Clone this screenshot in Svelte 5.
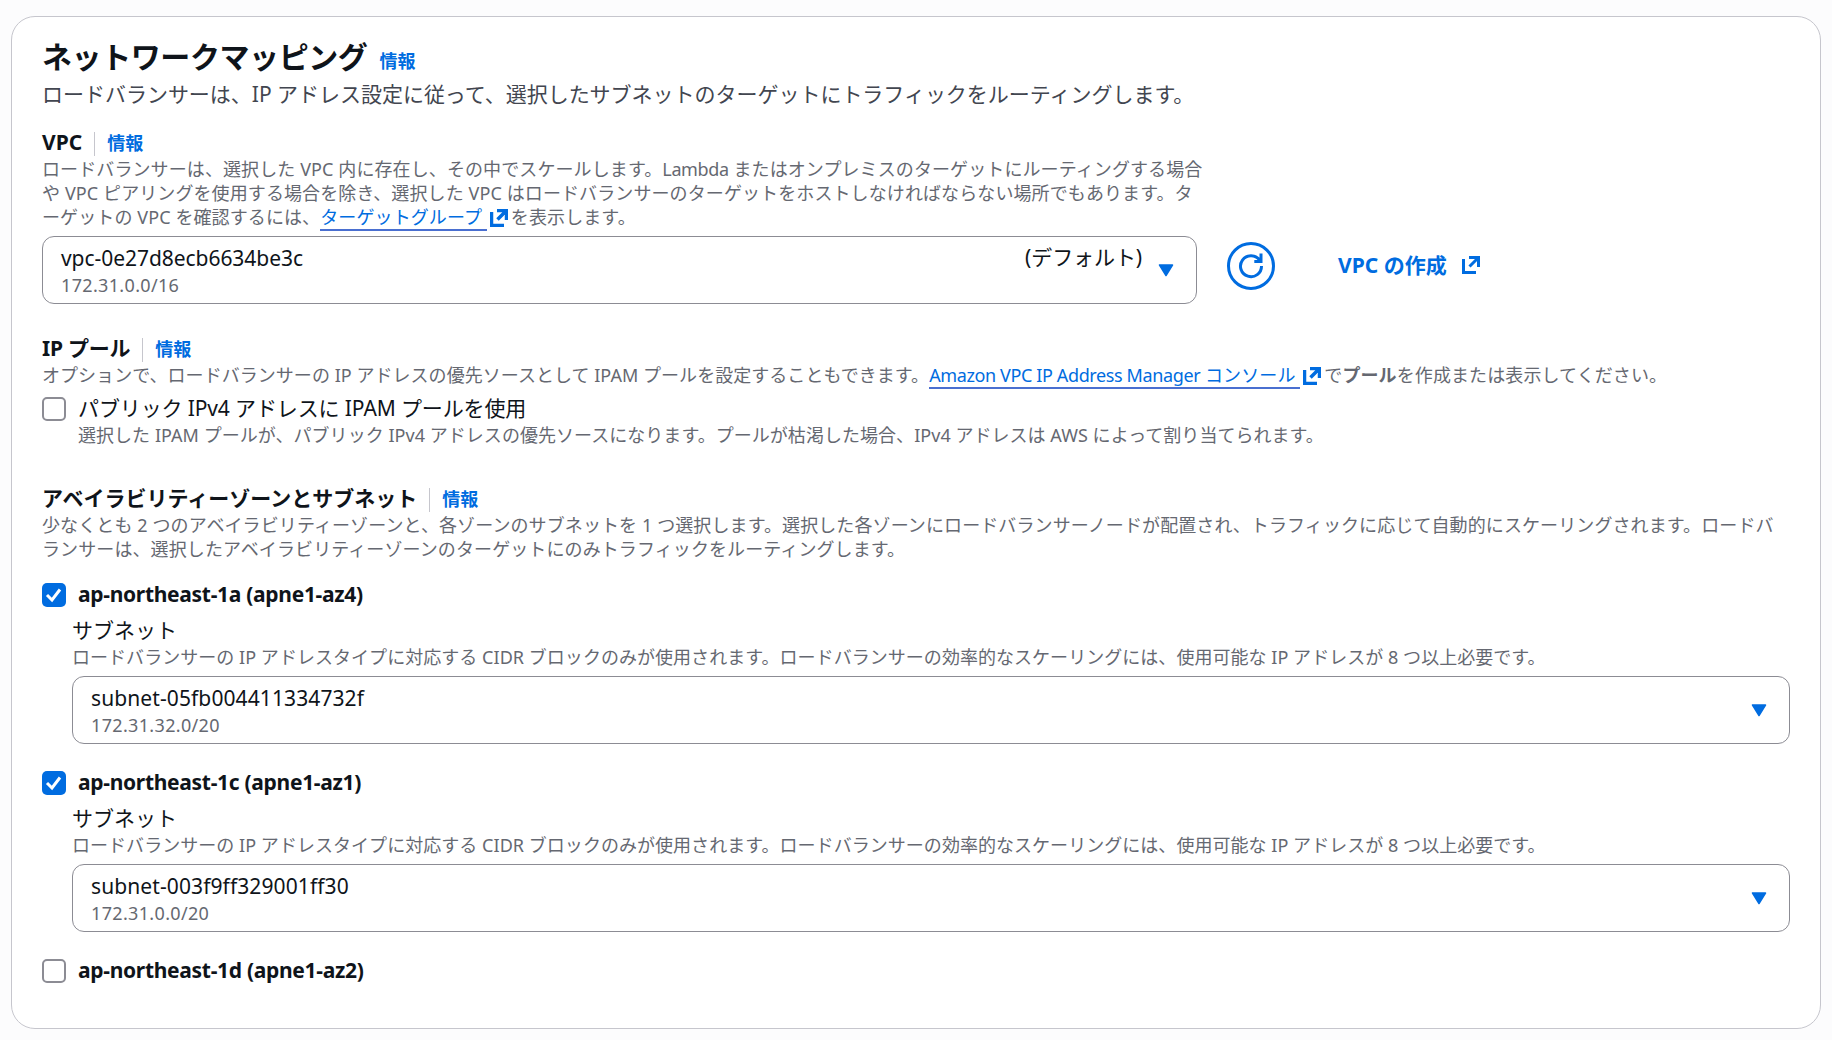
<script>
  let vpc = {
    id: 'vpc-0e27d8ecb6634be3c',
    cidr: '172.31.0.0/16',
    note: '(デフォルト)'
  };

  let useIpamPool = false;

  let zones = [
    { name: 'ap-northeast-1a (apne1-az4)', checked: true, subnet: 'subnet-05fb004411334732f', cidr: '172.31.32.0/20' },
    { name: 'ap-northeast-1c (apne1-az1)', checked: true, subnet: 'subnet-003f9ff329001ff30', cidr: '172.31.0.0/20' },
    { name: 'ap-northeast-1d (apne1-az2)', checked: false }
  ];
</script>

{#snippet external()}
  <svg class="external" viewBox="0 0 18 18" aria-hidden="true">
    <path d="M7 1.5h9.5V11M16 2L7.5 10.5M1.5 3v13.5h12.5" />
  </svg>
{/snippet}

{#snippet caret()}
  <svg class="caret" viewBox="0 0 16 13" aria-hidden="true">
    <path d="M1.5 1h13L8 11.5z" />
  </svg>
{/snippet}

<section class="container">
  <header>
    <h2>ネットワークマッピング</h2>
    <a class="info" href="#info">情報</a>
  </header>
  <p class="lead">ロードバランサーは、IP アドレス設定に従って、選択したサブネットのターゲットにトラフィックをルーティングします。</p>

  <div class="field vpc">
    <div class="label"><h3>VPC</h3><a class="info" href="#info">情報</a></div>
    <p class="hint wide">
      ロードバランサーは、選択した VPC 内に存在し、その中でスケールします。<span class="latin">Lambda</span> またはオンプレミスのターゲットにルーティングする場合<br />や VPC ピアリングを使用する場合を除き、選択した VPC はロードバランサーのターゲットをホストしなければならない場所でもあります。タ<br />ーゲットの VPC を確認するには、<a class="link" href="#tg">ターゲットグループ&nbsp;</a>{@render external()}を表示します。
    </p>
    <div class="vpc-row">
      <button class="select vpc-select">
        <span class="option">
          <span class="value">{vpc.id}</span>
          <span class="cidr">{vpc.cidr}</span>
        </span>
        <span class="note">{vpc.note}</span>
        {@render caret()}
      </button>
      <button class="refresh" aria-label="更新">
        <svg viewBox="0 0 24 24" aria-hidden="true">
          <path d="M22.5 12A10.5 10.5 0 1 1 20.5 6M22 -0.5v8H15.3" />
        </svg>
      </button>
      <a class="create" href="#create">VPC の作成{@render external()}</a>
    </div>
  </div>

  <div class="field pool">
    <div class="label"><h3>IP プール</h3><a class="info" href="#info">情報</a></div>
    <p class="hint">
      オプションで、ロードバランサーの IP アドレスの優先ソースとして IPAM プールを設定することもできます。<a class="link" href="#ipam"><span class="latin">Amazon VPC IP Address Manager</span> コンソール&nbsp;</a>{@render external()}<span class="wide">で<b>プール</b>を作成または表示してください。</span>
    </p>
    <label class="check">
      <input type="checkbox" bind:checked={useIpamPool} />
      <span>パブリック IPv4 アドレスに IPAM プールを使用</span>
    </label>
    <p class="hint check-hint">選択した IPAM プールが、パブリック IPv4 アドレスの優先ソースになります。プールが枯渇した場合、IPv4 アドレスは AWS によって割り当てられます。</p>
  </div>

  <div class="field zones">
    <div class="label"><h3>アベイラビリティーゾーンとサブネット</h3><a class="info" href="#info">情報</a></div>
    <p class="hint wide">
      少なくとも 2 つのアベイラビリティーゾーンと、各ゾーンのサブネットを 1 つ選択します。選択した各ゾーンにロードバランサーノードが配置され、トラフィックに応じて自動的にスケーリングされます。ロードバ<br />ランサーは、選択したアベイラビリティーゾーンのターゲットにのみトラフィックをルーティングします。
    </p>

    <div class="zone-list">
      {#each zones as zone}
        <div class="zone">
          <label class="check strong">
            <input type="checkbox" bind:checked={zone.checked} />
            <span>{zone.name}</span>
          </label>
          {#if zone.checked}
            <div class="subnet">
              <div class="subnet-label">サブネット</div>
              <p class="hint">ロードバランサーの IP アドレスタイプに対応する CIDR ブロックのみが使用されます。ロードバランサーの効率的なスケーリングには、使用可能な IP アドレスが 8 つ以上必要です。</p>
              <button class="select">
                <span class="option">
                  <span class="value">{zone.subnet}</span>
                  <span class="cidr">{zone.cidr}</span>
                </span>
                {@render caret()}
              </button>
            </div>
          {/if}
        </div>
      {/each}
    </div>
  </div>
</section>

<style>
:global(body) {
  background: #fcfcfd;
}

.container {
  box-sizing: border-box;
  width: 1810px;
  height: 1013px;
  margin: 16px 0 0 11px;
  padding: 22px 30px 0;
  border: 1px solid #c6c6cd;
  border-radius: 24px;
  background: #fff;
  color: #0f141a;
  font-family: "Noto Sans", "Noto Sans CJK JP", sans-serif;
  font-size: 21px;
  line-height: 30px;
}

h2, h3, p {
  margin: 0;
}

a {
  color: #006ce0;
  text-decoration: none;
}

button {
  font: inherit;
  color: inherit;
  background: #fff;
  cursor: pointer;
}

header {
  display: flex;
  align-items: baseline;
  height: 40px;
}

h2 {
  font-size: 30px;
  line-height: 36px;
  letter-spacing: -0.42px;
}

header .info {
  margin-left: 12px;
}

.info {
  font-size: 18px;
  font-weight: 700;
  line-height: 24px;
}

.lead {
  color: #424650;
  letter-spacing: -0.02px;
  white-space: nowrap;
}

.label {
  display: flex;
  align-items: center;
  height: 30px;
  margin-bottom: -1px;
}

h3 {
  padding-bottom: 2px;
  font-size: 21px;
  line-height: 28px;
}

.label .info {
  display: flex;
  align-items: center;
  box-sizing: border-box;
  height: 24px;
  margin: 2px 0 0 12px;
  padding: 0 0 2px 12px;
  border-left: 1px solid #c6c6cd;
}

.hint {
  color: #656871;
  font-size: 18px;
  line-height: 24px;
  letter-spacing: 0.04px;
  white-space: nowrap;
}

.wide {
  letter-spacing: 0.1px;
}

.latin {
  letter-spacing: -0.38px;
}

.link {
  border-bottom: 2px solid #4a6fd0;
  letter-spacing: 0.1px;
}

.external {
  width: 18px;
  height: 18px;
  fill: none;
  stroke: #006ce0;
  stroke-width: 3;
}

.hint .external {
  margin: 0 3px;
  stroke-width: 3.5;
  vertical-align: -3px;
}

.vpc {
  margin-top: 19px;
}

.vpc-row {
  display: flex;
  align-items: flex-start;
  margin-top: 7px;
}

.select {
  display: flex;
  align-items: center;
  box-sizing: border-box;
  width: 100%;
  height: 68px;
  padding: 0 22px 0 18px;
  border: 1px solid #8c8c94;
  border-radius: 12px;
  text-align: left;
}

.vpc-select {
  width: 1155px;
}

.option {
  display: flex;
  flex: 1;
  flex-direction: column;
  padding-bottom: 1px;
}

.value {
  line-height: 30px;
  letter-spacing: 0.1px;
}

.vpc-select .value {
  letter-spacing: -0.05px;
}

.cidr {
  color: #656871;
  font-size: 18px;
  line-height: 24px;
  letter-spacing: 0.34px;
}

.note {
  align-self: flex-start;
  margin: 5px 16px 0 0;
  letter-spacing: -0.1px;
}

.caret {
  flex: none;
  width: 16px;
  height: 13px;
  fill: #006ce0;
  stroke: #006ce0;
  stroke-width: 1.5;
  stroke-linejoin: round;
}

.refresh {
  display: grid;
  place-items: center;
  box-sizing: border-box;
  width: 48px;
  height: 48px;
  margin: 6px 0 0 30px;
  padding: 0;
  border: 3px solid #006ce0;
  border-radius: 50%;
}

.refresh svg {
  width: 24px;
  height: 24px;
  overflow: visible;
  fill: none;
  stroke: #006ce0;
  stroke-width: 3;
}

.create {
  display: flex;
  align-items: center;
  gap: 15px;
  height: 48px;
  margin: 5px 0 0 63px;
  font-weight: 700;
}

.pool {
  margin-top: 30px;
}

.pool h3 {
  letter-spacing: -0.25px;
}

.pool .check {
  margin-top: 7px;
  letter-spacing: -0.12px;
}

.check {
  display: flex;
  align-items: center;
  gap: 12px;
  height: 30px;
}

.check span {
  padding-bottom: 2px;
  line-height: 28px;
}

.check input {
  appearance: none;
  box-sizing: border-box;
  width: 24px;
  height: 24px;
  margin: 0;
  border: 2px solid #8c8c94;
  border-radius: 5px;
}

.check input:checked {
  border: 0;
  background: #006ce0 url("data:image/svg+xml,%3Csvg xmlns='http://www.w3.org/2000/svg' viewBox='0 0 24 24'%3E%3Cpath d='M5 12l5 5 8-10.5' fill='none' stroke='white' stroke-width='3'/%3E%3C/svg%3E");
}

.check-hint {
  margin-top: -1px;
  padding-left: 36px;
}

.strong {
  font-weight: 700;
  letter-spacing: -0.3px;
}

.zones {
  margin-top: 37px;
}

.zone-list {
  display: flex;
  flex-direction: column;
  gap: 24px;
  margin-top: 19px;
}

.subnet {
  padding: 5px 0 0 30px;
}

.subnet .select {
  margin-top: 7px;
}
</style>
